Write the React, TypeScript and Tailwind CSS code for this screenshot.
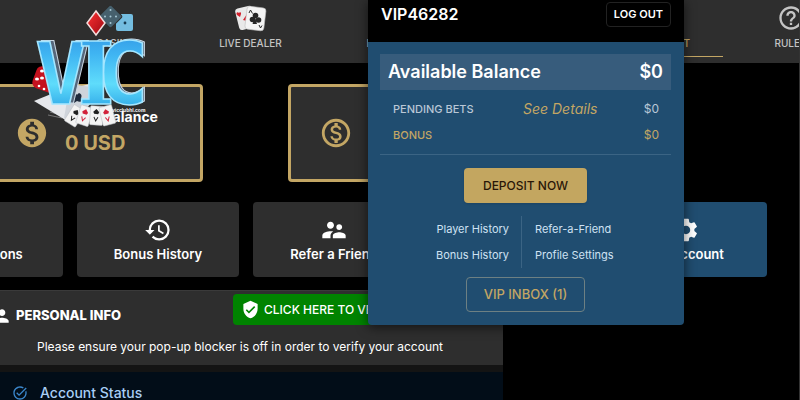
import {
  MdHelpOutline,
  MdHistory,
  MdMonetizationOn,
  MdOutlineMonetizationOn,
  MdPerson,
  MdReceiptLong,
  MdSettings,
  MdSupervisorAccount,
  MdTaskAlt,
  MdVerifiedUser,
  MdLiveTv,
  MdSportsSoccer,
  MdAccountCircle,
} from "react-icons/md";

function DiceIcon() {
  return (
    <svg viewBox="0 0 36 28" className="h-7 w-9">
      <rect x="18" y="10" width="17" height="17" rx="2" fill="#74bde0" />
      <circle cx="27" cy="19" r="1.4" fill="#16394f" />
      <rect x="4" y="4" width="17" height="17" rx="2" fill="#46606d" stroke="#2e2e2e" strokeWidth="1" transform="rotate(45 12.5 12.5)" />
      {[[12.5, 6], [12.5, 12.5], [12.5, 19], [7, 12.5], [18, 12.5]].map(([x, y]) => (
        <circle key={`${x}-${y}`} cx={x} cy={y} r="1" fill="#a9c9d6" />
      ))}
    </svg>
  );
}

function CardsIcon() {
  return (
    <svg viewBox="0 0 36 28" className="h-7 w-9">
      <rect x="4" y="3" width="17" height="22" rx="3" fill="#e9e9e9" transform="rotate(-14 12 14)" />
      <path d="M6 9c-1.600-2-3.500 0-2 2l3 2 1-3c.5-2-1.500-2.500-2-1z" fill="#d3202c" />
      <path d="M10 16l4-6v7z" fill="#d3202c" />
      <rect x="13" y="3" width="19" height="23" rx="3" fill="#f4f4f4" stroke="#bdbdbd" strokeWidth=".6" transform="rotate(7 22 14)" />
      <g fill="#262626">
        <circle cx="22.500" cy="11.500" r="2.800" />
        <circle cx="19.500" cy="15.500" r="2.800" />
        <circle cx="25.500" cy="16" r="2.800" />
        <path d="M22 13l2 7h-4.500z" />
        <path d="M16 9l1.500-3 2 3.500" fill="none" stroke="#262626" />
        <path d="M26 21l1.500 3 1.500-2.500" fill="none" stroke="#262626" />
      </g>
    </svg>
  );
}

function VicLogo() {
  return (
    <svg viewBox="0 0 120 130" className="h-[130px] w-[120px]" role="img" aria-label="VIC">
      <defs>
        <linearGradient id="ice" x1="0" y1="0" x2="0" y2="1">
          <stop offset="0" stopColor="#2f8fe0" />
          <stop offset=".3" stopColor="#3fb4f2" />
          <stop offset=".6" stopColor="#5fdcfb" />
          <stop offset="1" stopColor="#1389dc" />
        </linearGradient>
        <linearGradient id="ruby" x1="0" y1="0" x2="1" y2="1">
          <stop offset="0" stopColor="#f33" />
          <stop offset="1" stopColor="#9c0712" />
        </linearGradient>
      </defs>
      {/* red die */}
      <rect x="4" y="68" width="24" height="23" rx="6" fill="#c5121f" transform="rotate(20 16 79)" />
      <g fill="#fff">
        <ellipse cx="12" cy="71" rx="2" ry="1.500" />
        <ellipse cx="7" cy="79" rx="2" ry="1.500" />
        <ellipse cx="12" cy="78" rx="2" ry="1.500" />
        <circle cx="9" cy="86" r="1.300" />
        <circle cx="14" cy="89" r="1.300" />
      </g>
      {/* large cards lying behind the letters */}
      <path d="M18 115l14 3M20 112l18 5" stroke="#777" strokeWidth="1" />
      <path d="M4 101l22-9 34-8 2 18-20 22z" fill="#e6e8ec" />
      <path d="M40 84l28 4-20 34-14-4z" fill="#cfd4db" />
      <path d="M43 98c-1-4 2-6 4-3 2-4 6 0 4 3 3 3-1 5-4 3l-3 2v-3c-3 1-4-1-1-2z" fill="#1d2a3c" />
      <g fontFamily="'DejaVu Sans Mono', monospace" fontWeight="700" fontSize="86" textAnchor="middle">
        <g fill="#56677b" stroke="#c9d6e2" strokeWidth="1">
          <text x="35" y="103">V</text>
          <text x="95" y="103">C</text>
        </g>
        <g fill="url(#ice)" stroke="#a4e6ff" strokeWidth="1.500">
          <text x="31" y="104">V</text>
          <text x="93" y="104">C</text>
          <text x="66" y="104" fontFamily="'DejaVu Serif Condensed', 'DejaVu Serif', serif">I</text>
        </g>
      </g>
      {/* small aces fanned in front */}
      {[
        { x: 39, r: 32, c: "#202020" },
        { x: 49, r: 18, c: "#d2213a" },
        { x: 61, r: 4, c: "#202020" },
        { x: 72, r: -14, c: "#d2213a" },
      ].map((card) => (
        <g key={card.x} transform={`rotate(${card.r} ${card.x + 5} 116)`}>
          <rect x={card.x - 1} y="106" width="13" height="19" rx="1" fill="#f3f3f3" stroke="#b8bcc2" strokeWidth=".5" />
          <path d={`M${card.x + 5} 109l3 3-1 2h-4l-1-2z`} fill={card.c} />
          <path d={`M${card.x + 3} 117l2 4 2-4`} fill="none" stroke={card.c} />
        </g>
      ))}
      <path d="M66 11l9 12-9 12-9-12z" fill="url(#ruby)" stroke="#f4dede" strokeWidth="1.500" />
      <text x="82" y="112" fontFamily="'Liberation Sans', sans-serif" fontWeight="700" fontSize="5" fill="#fff">vicclubhl.com</text>
    </svg>
  );
}

const navItems = [
  { label: "CASINO", icon: <DiceIcon /> },
  { label: "LIVE DEALER", icon: <CardsIcon /> },
  { label: "LIVE TV", icon: <MdLiveTv size={28} /> },
  { label: "SPORTS", icon: <MdSportsSoccer size={28} /> },
  { label: "MY ACCOUNT", icon: <MdAccountCircle size={28} />, active: true },
  { label: "RULES", icon: <MdHelpOutline size={28} /> },
];

const tiles = [
  { label: "Transactions", icon: MdReceiptLong },
  { label: "Bonus History", icon: MdHistory },
  { label: "Refer a Friend", icon: MdSupervisorAccount },
  { label: "Settings", icon: MdSettings },
  { label: "My Account", icon: MdSettings, active: true },
];

function AccountMenu() {
  return (
    <aside className="absolute left-[368px] top-0 w-[316px] overflow-hidden rounded-b bg-[#204d70] shadow-[0_2px_12px_rgba(0,0,0,0.6)]">
      <div className="flex h-[42px] items-start justify-between bg-black px-[13px] pt-0.5">
        <h2 className="text-base font-semibold leading-6">VIP46282</h2>
        <button className="h-[25px] rounded border border-[#222] px-[7px] text-[11px] font-semibold">LOG OUT</button>
      </div>
      <div className="flex flex-col items-center pb-3 pl-3 pr-[13px] pt-3">
        <div className="flex h-9 w-full items-center justify-between bg-[#375c7c] px-2 text-lg font-semibold">
          <span>Available Balance</span>
          <span>$0</span>
        </div>
        <dl className="w-full border-b border-[#3b6484] py-[6px] pl-[13px] pr-3 text-[11px] font-medium text-[#b9c7d6]">
          <div className="flex h-[26px] items-center">
            <dt className="w-[130px]">PENDING BETS</dt>
            <dd className="flex flex-1 items-center justify-between">
              <a href="#" className="text-sm font-normal italic text-[#c3a664]">See Details</a>
              <span className="text-xs font-normal">$0</span>
            </dd>
          </div>
          <div className="flex h-[26px] items-center justify-between text-[#c3a664]">
            <dt>BONUS</dt>
            <dd className="text-xs font-normal">$0</dd>
          </div>
        </dl>
        <button className="mt-[13px] h-[35px] w-[123px] rounded bg-[#c3a660] text-xs font-medium text-[#2a1708] shadow">DEPOSIT NOW</button>
        <div className="mt-[13px] grid w-full grid-cols-[142px_1fr] text-[11px] text-[#cfe2f3]">
          <div className="flex h-[52px] flex-col items-end border-r border-[#3b6484] pr-3 leading-[26px]">
            <a href="#">Player History</a>
            <a href="#">Bonus History</a>
          </div>
          <div className="flex flex-col items-start pl-[13px] leading-[26px]">
            <a href="#">Refer-a-Friend</a>
            <a href="#">Profile Settings</a>
          </div>
        </div>
        <button className="mt-[9px] mb-px h-[35px] w-[119px] rounded-sm border border-[#6d8083] text-[13px] font-medium text-[#c3a664]">VIP INBOX (1)</button>
      </div>
    </aside>
  );
}

export default function App() {
  return (
    <div className="relative h-screen overflow-hidden border-r border-[#333] bg-black font-['Inter',sans-serif] text-white">
      <header className="h-[63px] bg-[#2e2e2e] pl-12">
        <nav className="flex">
          {navItems.map((item) => (
            <a
              key={item.label}
              href="#"
              className={
                item.active
                  ? "flex h-[57px] w-[135px] shrink-0 flex-col items-center border-b border-[#c3a664] pt-1 text-[10px] font-medium text-[#c3a664]"
                  : "flex h-[57px] w-[135px] shrink-0 flex-col items-center pt-1 text-[10px] font-medium text-[#c4c4c4]"
              }
            >
              <span className="flex h-7 items-center">{item.icon}</span>
              <span className="mt-[3px] leading-4">{item.label}</span>
            </a>
          ))}
        </nav>
      </header>

      <main>
        <section className="-ml-4 mt-[21px] flex gap-[85px]">
          <div className="flex h-[98px] w-[219px] shrink-0 items-center gap-4 rounded border-3 border-[#c3a664] bg-[#2e2e2e] pl-7">
            <MdMonetizationOn size={34} className="text-[#c3a664]" />
            <div>
              <h3 className="text-sm font-bold leading-5">Cash Balance</h3>
              <p className="text-xl font-bold leading-8 text-[#c3a664]">0 USD</p>
            </div>
          </div>
          <div className="flex h-[98px] w-[219px] shrink-0 items-center gap-4 rounded border-3 border-[#c3a664] bg-[#2e2e2e] pl-7">
            <MdOutlineMonetizationOn size={34} className="text-[#c3a664]" />
            <div>
              <h3 className="text-sm font-bold leading-5">Bonus Balance</h3>
              <p className="text-xl font-bold leading-8 text-[#c3a664]">0 USD</p>
            </div>
          </div>
        </section>

        <section className="-ml-[99px] mt-5 flex gap-[14px]">
          {tiles.map((tile) => (
            <button
              key={tile.label}
              className={
                tile.active
                  ? "flex h-[75px] w-[162px] shrink-0 flex-col items-center rounded bg-[#204d70] pt-[14px] text-[13px] font-semibold"
                  : "flex h-[75px] w-[162px] shrink-0 flex-col items-center rounded bg-[#2e2e2e] pt-[14px] text-[13px] font-semibold"
              }
            >
              <tile.icon size={28} />
              <span className="leading-5">{tile.label}</span>
            </button>
          ))}
        </section>

        <section className="mt-[13px] w-[503px] bg-[#141414]">
          <div className="h-[75px] border-t border-[#3a3a3a] bg-[#2e2e2e]">
            <div className="-ml-2 flex h-[38px] items-start pt-[3px]">
              <div className="flex h-10 w-[241px] items-center gap-1 pt-1">
                <MdPerson size={20} />
                <h3 className="text-[13px] font-extrabold">PERSONAL INFO</h3>
              </div>
              <button className="flex h-[31px] w-[220px] items-center gap-1 rounded bg-[#008300] pl-2 text-xs font-medium">
                <MdVerifiedUser size={19} />
                CLICK HERE TO VERIFY
              </button>
            </div>
            <p className="pl-[37px] pt-2 text-xs leading-5">
              Please ensure your pop-up blocker is off in order to verify your account
            </p>
          </div>
          <div className="mt-[7px] flex h-[42px] items-center gap-3 bg-[#020d18] pl-3 text-sm font-medium text-[#a8cdf5]">
            <MdTaskAlt size={16} className="text-[#3b87cc]" />
            Account Status
          </div>
        </section>
      </main>

      <AccountMenu />
      <div className="absolute left-[30px] top-0">
        <VicLogo />
      </div>
    </div>
  );
}
